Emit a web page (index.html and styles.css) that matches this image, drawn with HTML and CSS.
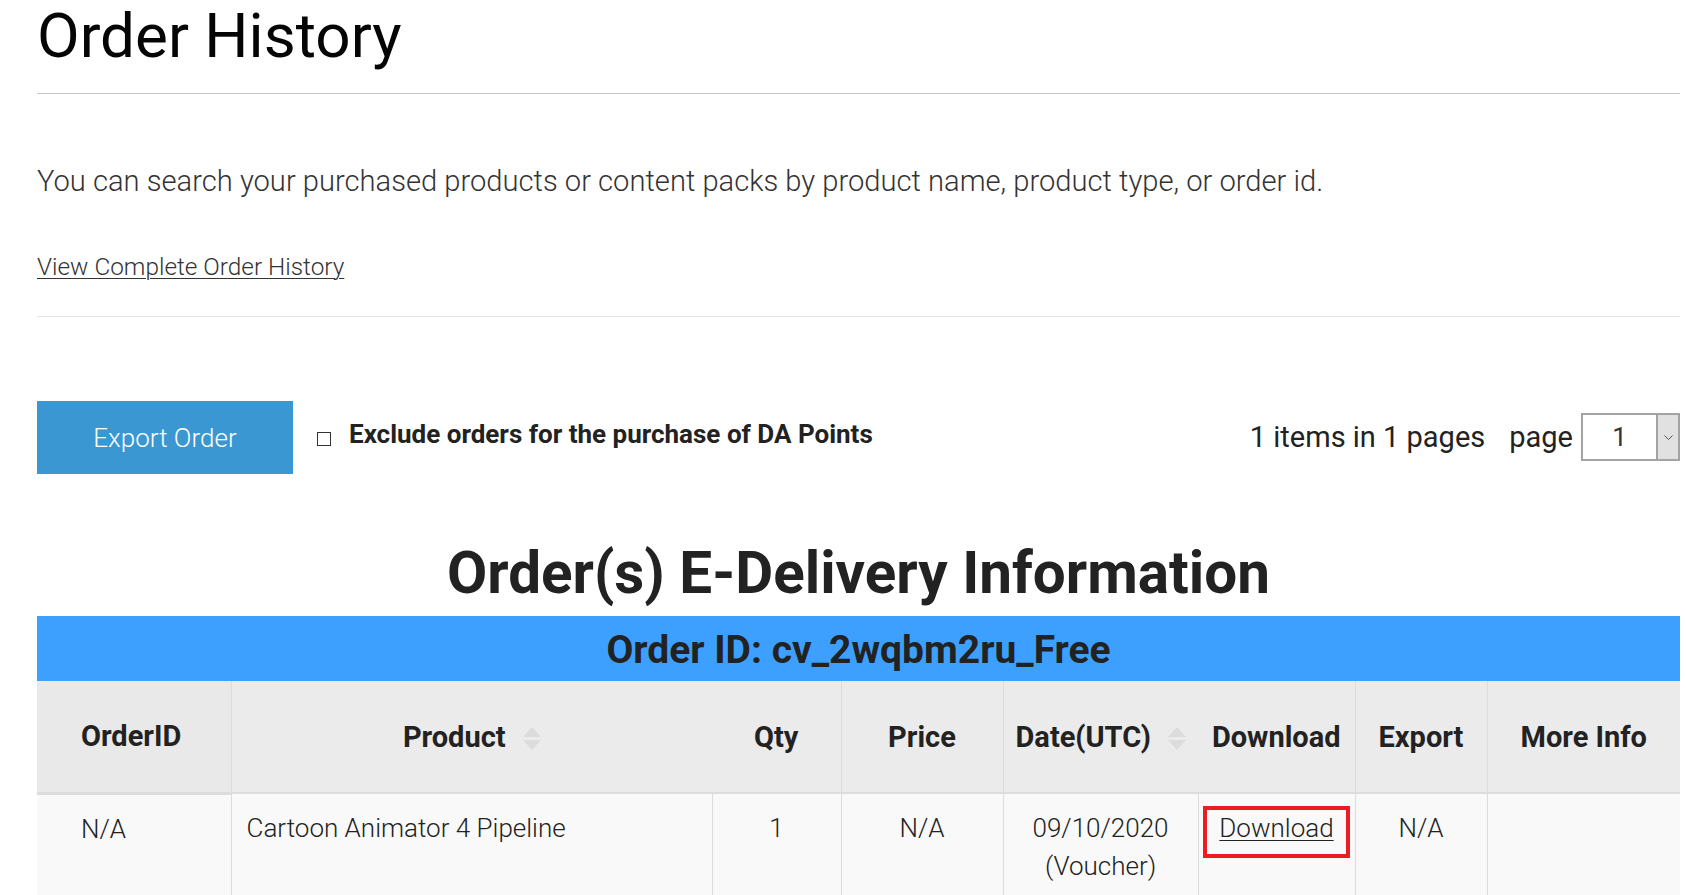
FILE: index.html
```html
<!DOCTYPE html>
<html lang="en">
<head>
<meta charset="utf-8">
<title>Order History</title>
<link rel="stylesheet" href="styles.css">
</head>
<body>
<div class="page">
  <h1 class="title">Order History</h1>
  <hr class="rule rule-strong">
  <p class="intro">You can search your purchased products or content packs by product name, product type, or order id.</p>
  <a class="history-link" href="#">View Complete Order History</a>
  <hr class="rule rule-light">

  <div class="toolbar">
    <button class="export-btn" type="button">Export Order</button>
    <label class="exclude">
      <span class="checkbox"></span>
      <span class="exclude-text">Exclude orders for the purchase of DA Points</span>
    </label>
    <div class="pager">
      <span class="pager-count">1 items in 1 pages</span>
      <span class="pager-label">page</span>
      <div class="select">
        <span class="select-value">1</span>
        <span class="select-arrow">
          <svg width="9" height="5" viewBox="0 0 9 5"><path d="M0.5 0.5 L4.5 4.5 L8.5 0.5" fill="none" stroke="#555" stroke-width="1"/></svg>
        </span>
      </div>
    </div>
  </div>

  <h2 class="section-title">Order(s) E-Delivery Information</h2>
  <div class="order-bar">Order ID: cv_2wqbm2ru_Free</div>

  <table class="orders">
    <thead>
      <tr>
        <th class="c-id sep">OrderID</th>
        <th class="c-product">Product<svg class="sort" width="18" height="23" viewBox="0 0 18 23"><polygon points="9,0 18,10 0,10"/><polygon points="0,13 18,13 9,23"/></svg></th>
        <th class="c-qty sep">Qty</th>
        <th class="c-price sep">Price</th>
        <th class="c-date">Date(UTC)<svg class="sort" width="18" height="23" viewBox="0 0 18 23"><polygon points="9,0 18,10 0,10"/><polygon points="0,13 18,13 9,23"/></svg></th>
        <th class="c-dl sep">Download</th>
        <th class="c-export sep">Export</th>
        <th class="c-info">More Info</th>
      </tr>
    </thead>
    <tbody>
      <tr>
        <td class="left-id">N/A</td>
        <td class="left-product">Cartoon Animator 4 Pipeline</td>
        <td>1</td>
        <td>N/A</td>
        <td>09/10/2020<br>(Voucher)</td>
        <td><span class="dl-box"><a class="dl-link" href="#">Download</a></span></td>
        <td>N/A</td>
        <td></td>
      </tr>
    </tbody>
  </table>
</div>
</body>
</html>
```

FILE: styles.css
```css
html, body {
  margin: 0;
  padding: 0;
  background: #ffffff;
}

body {
  font-family: Roboto, "Liberation Sans", Arial, sans-serif;
  color: #333;
  overflow: hidden;
}

.page {
  margin-left: 37px;
  width: 1643px;
}

.title {
  margin: 0;
  font-size: 62px;
  line-height: 72px;
  font-weight: 400;
  color: #050505;
}

.rule {
  border: 0;
  height: 0;
  margin: 0;
}

.rule-strong {
  margin-top: 21px;
  border-top: 1px solid #c6c6c6;
}

.intro {
  margin: 67px 0 0;
  font-size: 29.15px;
  line-height: 40px;
  font-weight: 300;
  color: #333;
}

.history-link {
  display: inline-block;
  margin-top: 51px;
  font-size: 24.35px;
  line-height: 30px;
  font-weight: 300;
  color: #333;
  text-decoration: underline;
  text-underline-offset: 3px;
  text-decoration-thickness: 1px;
}

.rule-light {
  margin-top: 34px;
  border-top: 1px solid #e2e2e2;
}

.toolbar {
  display: flex;
  align-items: flex-start;
  margin-top: 84px;
  height: 73px;
}

.export-btn {
  width: 256px;
  height: 73px;
  border: 0;
  background: #3b97d1;
  color: #fff;
  font-family: Roboto, "Liberation Sans", Arial, sans-serif;
  font-size: 26px;
  font-weight: 300;
  padding: 0;
  flex: none;
}

.exclude {
  display: flex;
  align-items: flex-start;
  margin-left: 24px;
}

.checkbox {
  display: block;
  width: 12px;
  height: 12px;
  border: 1.5px solid #333;
  margin-top: 31px;
  background: #fff;
}

.exclude-text {
  display: block;
  margin-left: 18px;
  margin-top: 17px;
  font-size: 26px;
  line-height: 32px;
  font-weight: 700;
  color: #222;
}

.pager {
  display: flex;
  align-items: center;
  margin-left: auto;
  margin-top: 12px;
  height: 48px;
}

.pager-count,
.pager-label {
  font-size: 29px;
  line-height: 48px;
  font-weight: 400;
  color: #222;
}

.pager-label {
  margin-left: 24px;
}

.select {
  display: flex;
  margin-left: 8px;
  width: 99px;
  height: 48px;
  box-sizing: border-box;
  border: 2px solid #a3a3a3;
  background: #fff;
}

.select-value {
  flex: 1;
  text-align: center;
  font-size: 26px;
  line-height: 44px;
  color: #333;
}

.select-arrow {
  width: 20px;
  border-left: 2px solid #a3a3a3;
  background: #e1e1e1;
  display: flex;
  align-items: center;
  justify-content: center;
}

.section-title {
  margin: 64px 0 8px;
  text-align: center;
  font-size: 58.4px;
  line-height: 70px;
  font-weight: 700;
  color: #222;
}

.order-bar {
  height: 65px;
  box-sizing: border-box;
  padding-top: 4px;
  line-height: 61px;
  background: #3ea0fe;
  text-align: center;
  font-size: 39px;
  font-weight: 700;
  color: #222;
}

.orders {
  width: 1643px;
  table-layout: fixed;
  border-collapse: collapse;
}

.orders th {
  box-sizing: border-box;
  height: 112px;
  padding: 0;
  background: #ebebeb;
  font-size: 29px;
  font-weight: 700;
  color: #222;
  text-align: center;
  vertical-align: middle;
  border-bottom: 2px solid #dcdcdc;
  white-space: nowrap;
}

.orders th.sep {
  border-right: 1px solid #dcdcdc;
}

.orders th.c-id {
  text-align: left;
  padding-left: 44px;
  background: #e9e9e9;
  border-bottom: 3px solid #dcdcdc;
}

.c-id { width: 194px; }
.c-product { width: 481px; }
.c-qty { width: 129px; }
.c-price { width: 162px; }
.c-date { width: 195px; }
.c-dl { width: 157px; }
.c-export { width: 132px; }
.c-info { width: 193px; }

.sort {
  fill: #dcdcdc;
  margin-left: 17px;
  vertical-align: -3px;
}

.orders td {
  box-sizing: border-box;
  height: 110px;
  padding: 15px 0 0;
  background: #f9f9f9;
  font-size: 26px;
  line-height: 38px;
  font-weight: 300;
  color: #222;
  text-align: center;
  vertical-align: top;
  border-right: 1px solid #dcdcdc;
}

.orders td:last-child {
  border-right: 0;
}

.orders td.left-id {
  text-align: left;
  padding-left: 44px;
}

.orders td.left-product {
  text-align: left;
  padding-left: 15px;
}

.dl-box {
  display: inline-block;
  border: 4px solid #ec1c24;
  padding: 0 12px 7px;
  line-height: 37px;
  margin-top: -3px;
}

.dl-link {
  color: #222;
  text-decoration: underline;
  text-underline-offset: 3px;
  text-decoration-thickness: 1px;
}
```
